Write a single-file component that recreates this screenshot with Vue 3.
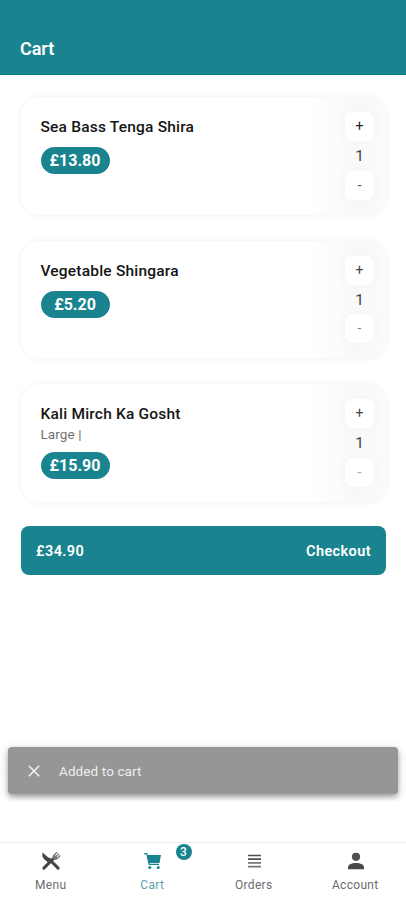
<script setup>
const items = [
  { name: 'Sea Bass Tenga Shira', price: '£13.80', qty: 1, tone: 'strong' },
  { name: 'Vegetable Shingara', price: '£5.20', qty: 1, tone: 'medium' },
  { name: 'Kali Mirch Ka Gosht', note: 'Large |', price: '£15.90', qty: 1, tone: 'light' },
]
</script>

<template>
  <div class="screen">
    <header class="header"><h1>Cart</h1></header>

    <main class="content">
      <section v-for="item in items" :key="item.name" class="card" :class="item.tone">
        <div class="info">
          <h2>{{ item.name }}</h2>
          <p v-if="item.note" class="note">{{ item.note }}</p>
          <span class="price">{{ item.price }}</span>
        </div>
        <div class="stepper">
          <button class="step plus">+</button>
          <span class="qty">{{ item.qty }}</span>
          <button class="step minus">-</button>
        </div>
      </section>

      <button class="checkout"><span>£34.90</span><span class="go">Checkout</span></button>
    </main>

    <div class="snack-area">
      <div class="snack">
        <svg width="12" height="12" viewBox="0 0 12 12"><path d="M.8 .8L11.200 11.200M11.200 .8L.8 11.200" stroke="#f2f2f2" stroke-width="1.500" fill="none" /></svg>
        <span>Added to cart</span>
      </div>
    </div>

    <nav class="tabs">
      <a class="tab">
        <svg width="20" height="20" viewBox="0 0 20 20">
          <path d="M1.600 1.400C.8 3.800 1.600 6.500 3.400 8.300L6.900 11.600L9.700 8.800Z" fill="#444" />
          <path d="M8 8L17.100 17.100" stroke="#444" stroke-width="3" stroke-linecap="round" />
          <path d="M2.900 17.100L13 7" stroke="#444" stroke-width="3" stroke-linecap="round" />
          <path d="M12 7.800C10.900 6.300 11.700 4.500 13 3.200L15.600 .8L16.500 1.700L14 4.300L14.700 5L17.300 2.400L18.200 3.300L15.600 5.900L16.300 6.600L18.900 4L19.700 4.900L17.200 7.600C15.800 9 13.900 9.600 12 7.800Z" fill="#777" />
        </svg>
        <span>Menu</span>
      </a>
      <a class="tab active">
        <svg width="20" height="20" viewBox="0 0 20 20">
          <path d="M2 2.600H4.700L7.200 13.300H17" stroke="#17838f" stroke-width="1.300" fill="none" />
          <path d="M5.200 4H19L17.500 11.900H7.100Z" fill="#17838f" />
          <circle cx="7.800" cy="16.400" r="1.500" fill="#17838f" />
          <circle cx="16.200" cy="16.400" r="1.500" fill="#17838f" />
        </svg>
        <span>Cart</span>
        <b class="badge">3</b>
      </a>
      <a class="tab">
        <svg width="20" height="20" viewBox="0 0 20 20">
          <path d="M4 4.500H17M4 8.200H17" stroke="#505050" stroke-width="1.700" />
          <path d="M4 11.900H17M4 15.600H17" stroke="#777" stroke-width="1.700" />
        </svg>
        <span>Orders</span>
      </a>
      <a class="tab">
        <svg width="20" height="20" viewBox="0 0 20 20">
          <circle cx="11" cy="5.800" r="4.100" fill="#505050" />
          <path d="M3 18.200V16C3 13.500 6.500 11.900 11 11.900S19 13.500 19 16V18.200Z" fill="#484848" />
        </svg>
        <span>Account</span>
      </a>
    </nav>
  </div>
</template>

<style>
body { background: #fff; }
</style>

<style scoped>
.screen {
  display: flex;
  flex-direction: column;
  width: 406px;
  height: 900px;
  overflow: hidden;
  background: #fff;
  font-family: Roboto, "Liberation Sans", sans-serif;
}
* { box-sizing: border-box; }
h1, h2, p { margin: 0; }
button { border: 0; padding: 0; font: inherit; }
.header {
  height: 75px;
  flex: none;
  padding: 38px 20px 0;
  background: #19848f;
  border-bottom: 1px solid #0f7d88;
}
h1 { color: #fff; font-size: 18px; line-height: 21px; font-weight: 600; letter-spacing: -.05px; }
.content {
  display: flex;
  flex-direction: column;
  gap: 26px;
  padding: 22px 20px 0 21px;
}
.card {
  display: flex;
  justify-content: space-between;
  height: 117.700px;
  padding: 15px 12px 0 19.500px;
  border-radius: 20px;
  background: linear-gradient(90deg, #fff 78%, #f9f9f9 92%, #fbfbfb);
  box-shadow: 0 0 5px 2px rgba(0, 0, 0, .045);
}
.info { padding-top: 5px; }
h2 { font-size: 15.500px; line-height: 21px; font-weight: 500; letter-spacing: .2px; color: #151515; white-space: nowrap; }
.note { font-size: 13.500px; line-height: 18px; letter-spacing: .1px; color: #707070; }
.price {
  display: flex;
  align-items: center;
  justify-content: center;
  width: 69px;
  height: 27px;
  margin-top: 9px;
  border-radius: 14px;
  background: #19848f;
  color: #fff;
  font-size: 16px;
  line-height: 20px;
  padding-top: 1px;
  font-weight: 700;
}
.stepper { display: flex; flex-direction: column; align-items: center; width: 29px; }
.step {
  width: 29px;
  height: 29px;
  border-radius: 8px;
  background: #fff;
  box-shadow: 0 0 14px 2px rgba(0, 0, 0, .025);
  font-size: 14px;
  line-height: 29px;
  color: #222;
}
.minus { color: #555; }
.medium .step { color: #444; }
.medium .minus { color: #888; }
.light .plus { color: #444; }
.light .minus { color: #aaa; }
.qty { height: 29.500px; font-size: 15.500px; line-height: 31px; color: #444; }
.checkout {
  display: flex;
  justify-content: space-between;
  align-items: center;
  height: 49px;
  margin-top: -2px;
  padding: 1px 15px 0;
  border-radius: 8px;
  background: #19848f;
  color: #fff;
  font-size: 14.500px;
  font-weight: 600;
  letter-spacing: .4px;
}
.snack-area { margin-top: auto; height: 72px; flex: none; padding: 17px 8px 0; overflow: hidden; }
.snack {
  display: flex;
  align-items: center;
  gap: 19px;
  height: 47px;
  padding-left: 20px;
  border-radius: 4px;
  background: #969696;
  box-shadow: 0 3px 5px rgba(0, 0, 0, .3), 0 2px 12px rgba(0, 0, 0, .14);
  color: #eee;
  font-size: 13.500px;
  letter-spacing: .1px;
}
.tabs {
  display: grid;
  grid-template-columns: repeat(4, 1fr);
  flex: none;
  height: 58px;
  margin-top: 40px;
  border-top: 1px solid #eee;
}
.tab {
  position: relative;
  display: flex;
  flex-direction: column;
  align-items: center;
  gap: 5px;
  padding-top: 8px;
  color: #6c6c6c;
  font-size: 12px;
  line-height: 18px;
  letter-spacing: .3px;
}
.active { color: #5c9faa; }
.badge {
  position: absolute;
  left: 74px;
  top: 1px;
  width: 16px;
  height: 16px;
  border-radius: 50%;
  background: #17838f;
  color: #fff;
  font-size: 12px;
  line-height: 17px;
  font-weight: 500;
  letter-spacing: 0;
  text-align: center;
}
</style>
